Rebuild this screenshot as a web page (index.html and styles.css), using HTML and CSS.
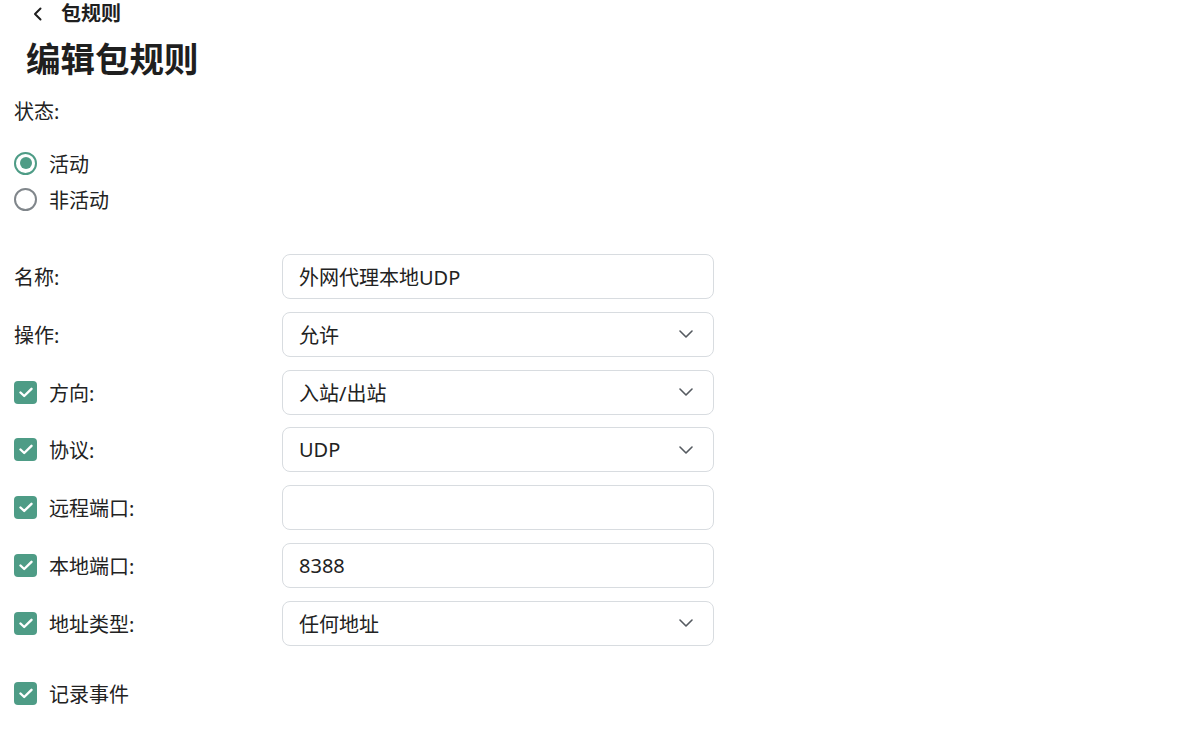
FILE: index.html
```html
<!DOCTYPE html>
<html lang="zh">
<head>
<meta charset="utf-8">
<link rel="stylesheet" href="styles.css">
</head>
<body>
<div class="page">
  <div class="back">
    <svg class="back-icon" width="12" height="14" viewBox="0 0 12 14"><path d="M8.5 1.5 L3 7 L8.5 12.5" fill="none" stroke="#1f1f1f" stroke-width="2" stroke-linecap="round" stroke-linejoin="round"/></svg>
    <span class="back-text">包规则</span>
  </div>
  <h1 class="title">编辑包规则</h1>
  <div class="section-label">状态:</div>
  <div class="radios">
    <label class="radio-row"><span class="radio on"><span class="dot"></span></span><span>活动</span></label>
    <label class="radio-row"><span class="radio"></span><span>非活动</span></label>
  </div>
  <div class="form">
    <div class="row">
      <div class="label">名称:</div>
      <div class="field"><span>外网代理本地UDP</span></div>
    </div>
    <div class="row">
      <div class="label">操作:</div>
      <div class="field select"><span>允许</span><svg class="chev" width="14" height="8" viewBox="0 0 14 8"><path d="M1 1 L7 7 L13 1" fill="none" stroke="#555a60" stroke-width="1.6" stroke-linecap="round" stroke-linejoin="round"/></svg></div>
    </div>
    <div class="row">
      <div class="label"><span class="cb"><svg width="14" height="11" viewBox="0 0 14 11"><path d="M1.5 5.5 L5.2 9 L12.5 1.8" fill="none" stroke="#fff" stroke-width="2.4" stroke-linecap="round" stroke-linejoin="round"/></svg></span>方向:</div>
      <div class="field select"><span>入站/出站</span><svg class="chev" width="14" height="8" viewBox="0 0 14 8"><path d="M1 1 L7 7 L13 1" fill="none" stroke="#555a60" stroke-width="1.6" stroke-linecap="round" stroke-linejoin="round"/></svg></div>
    </div>
    <div class="row">
      <div class="label"><span class="cb"><svg width="14" height="11" viewBox="0 0 14 11"><path d="M1.5 5.5 L5.2 9 L12.5 1.8" fill="none" stroke="#fff" stroke-width="2.4" stroke-linecap="round" stroke-linejoin="round"/></svg></span>协议:</div>
      <div class="field select"><span>UDP</span><svg class="chev" width="14" height="8" viewBox="0 0 14 8"><path d="M1 1 L7 7 L13 1" fill="none" stroke="#555a60" stroke-width="1.6" stroke-linecap="round" stroke-linejoin="round"/></svg></div>
    </div>
    <div class="row">
      <div class="label"><span class="cb"><svg width="14" height="11" viewBox="0 0 14 11"><path d="M1.5 5.5 L5.2 9 L12.5 1.8" fill="none" stroke="#fff" stroke-width="2.4" stroke-linecap="round" stroke-linejoin="round"/></svg></span>远程端口:</div>
      <div class="field"><span></span></div>
    </div>
    <div class="row">
      <div class="label"><span class="cb"><svg width="14" height="11" viewBox="0 0 14 11"><path d="M1.5 5.5 L5.2 9 L12.5 1.8" fill="none" stroke="#fff" stroke-width="2.4" stroke-linecap="round" stroke-linejoin="round"/></svg></span>本地端口:</div>
      <div class="field"><span>8388</span></div>
    </div>
    <div class="row">
      <div class="label"><span class="cb"><svg width="14" height="11" viewBox="0 0 14 11"><path d="M1.5 5.5 L5.2 9 L12.5 1.8" fill="none" stroke="#fff" stroke-width="2.4" stroke-linecap="round" stroke-linejoin="round"/></svg></span>地址类型:</div>
      <div class="field select"><span>任何地址</span><svg class="chev" width="14" height="8" viewBox="0 0 14 8"><path d="M1 1 L7 7 L13 1" fill="none" stroke="#555a60" stroke-width="1.6" stroke-linecap="round" stroke-linejoin="round"/></svg></div>
    </div>
  </div>
  <div class="log-row">
    <span class="cb"><svg width="14" height="11" viewBox="0 0 14 11"><path d="M1.5 5.5 L5.2 9 L12.5 1.8" fill="none" stroke="#fff" stroke-width="2.4" stroke-linecap="round" stroke-linejoin="round"/></svg></span>记录事件
  </div>
</div>
</body>
</html>
```

FILE: styles.css
```css
html, body {
  margin: 0;
  padding: 0;
  background: #ffffff;
}
body {
  font-family: "Noto Sans", "Noto Sans CJK SC", sans-serif;
  color: #222222;
  font-size: 20px;
}
.page {
  padding-left: 14px;
}
.back {
  display: flex;
  align-items: center;
  height: 28px;
  padding-left: 18px;
}
.back-icon {
  display: block;
}
.back-text {
  margin-left: 17px;
  font-weight: 700;
  font-size: 20px;
  line-height: 28px;
  color: #1f1f1f;
}
.title {
  margin: 7px 0 0 12px;
  font-size: 34.5px;
  line-height: 48px;
  font-weight: 700;
  color: #1f1f1f;
}
.section-label {
  margin-top: 15px;
  line-height: 28px;
}
.radios {
  margin-top: 19px;
  display: flex;
  flex-direction: column;
}
.radio-row {
  display: flex;
  align-items: center;
  height: 36px;
}
.radio {
  box-sizing: border-box;
  width: 23px;
  height: 23px;
  border-radius: 50%;
  border: 2px solid #80868b;
  margin-right: 12px;
  display: flex;
  align-items: center;
  justify-content: center;
}
.radio.on {
  border-color: #4e9c86;
}
.radio .dot {
  width: 12px;
  height: 12px;
  border-radius: 50%;
  background: #4e9c86;
}
.form {
  margin-top: 37px;
  display: flex;
  flex-direction: column;
  gap: 13.83px;
}
.row {
  display: flex;
  align-items: flex-start;
  height: 44px;
}
.label {
  width: 268px;
  height: 45px;
  display: flex;
  align-items: center;
}
.cb {
  width: 23px;
  height: 23px;
  border-radius: 4px;
  background: #4e9c86;
  margin-right: 12px;
  display: flex;
  align-items: center;
  justify-content: center;
  flex-shrink: 0;
}
.cb svg {
  display: block;
}
.field {
  box-sizing: border-box;
  width: 432px;
  height: 45px;
  border: 1.5px solid #d8dce0;
  border-radius: 8px;
  padding: 0 20px 0 16px;
  display: flex;
  align-items: center;
  justify-content: space-between;
  color: #222222;
}
.chev {
  display: block;
}
.log-row {
  margin-top: 31px;
  display: flex;
  align-items: center;
  height: 36px;
}
```
